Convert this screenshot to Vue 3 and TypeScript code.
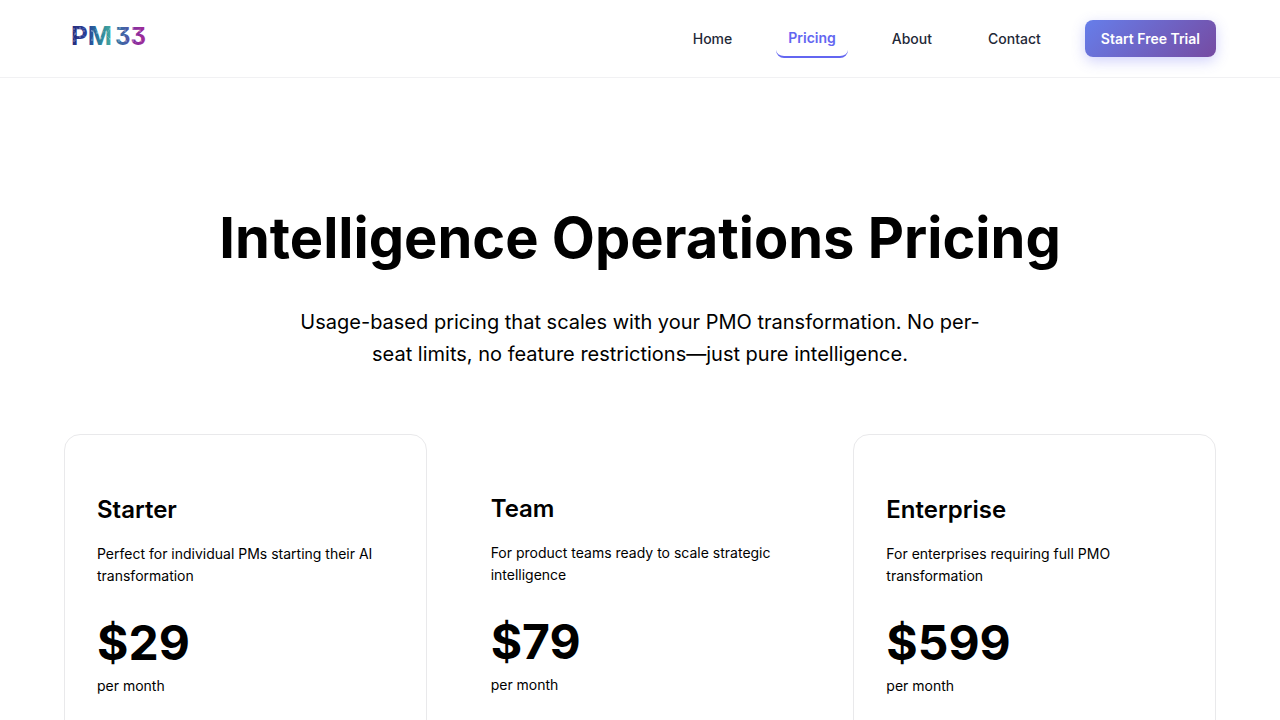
<script setup lang="ts">
interface NavLink {
  label: string
  active?: boolean
}

interface Plan {
  name: string
  description: string
  price: string
  period: string
  featured?: boolean
}

const links: NavLink[] = [
  { label: 'Home' },
  { label: 'Pricing', active: true },
  { label: 'About' },
  { label: 'Contact' },
]

const plans: Plan[] = [
  {
    name: 'Starter',
    description: 'Perfect for individual PMs starting their AI transformation',
    price: '$29',
    period: 'per month',
  },
  {
    name: 'Team',
    description: 'For product teams ready to scale strategic intelligence',
    price: '$79',
    period: 'per month',
    featured: true,
  },
  {
    name: 'Enterprise',
    description: 'For enterprises requiring full PMO transformation',
    price: '$599',
    period: 'per month',
  },
]

// Nodes of the circuit pattern laid over the wordmark
const logoNodes: [number, number][] = [
  [10, 9], [11, 14], [10, 21], [16, 8], [20, 11], [16, 17], [28, 11], [28, 20],
  [33, 13], [37, 18], [42, 12], [46, 9], [46, 19], [56, 8], [61, 11], [60, 16],
  [55, 21], [62, 21], [69, 8], [76, 11], [73, 16], [69, 21], [77, 21],
]
</script>

<template>
  <div class="page">
    <header class="header">
      <a class="logo" href="#" aria-label="PM 33">
        <svg width="88" height="37" viewBox="0 0 88 37">
          <defs>
            <linearGradient id="pm" gradientUnits="userSpaceOnUse" x1="8" y1="0" x2="48" y2="0">
              <stop offset="0" stop-color="#272c7c" />
              <stop offset="0.4" stop-color="#28409a" />
              <stop offset="0.65" stop-color="#2a7a9c" />
              <stop offset="1" stop-color="#45ada0" />
            </linearGradient>
            <linearGradient id="num" gradientUnits="userSpaceOnUse" x1="51" y1="0" x2="81" y2="0">
              <stop offset="0" stop-color="#2d7ba5" />
              <stop offset="0.42" stop-color="#4c58a5" />
              <stop offset="0.6" stop-color="#8430a0" />
              <stop offset="1" stop-color="#a02a96" />
            </linearGradient>
          </defs>
          <text class="logo-letters" x="7" y="25" fill="url(#pm)">PM</text>
          <text class="logo-digits" x="51" y="25" fill="url(#num)">33</text>
          <g fill="none" stroke="#ffffff" stroke-opacity="0.3" stroke-width="0.6">
            <path
              d="M8 10l4 3-3 4 3 4M12 8l4 2 5-2M13 17l5-2 4 2M27 10l4 4-3 5M31 9l5 7 4-5M45 10l-3 5 4 4M53 9l5 2 4-2M56 16l5 2-4 4M67 9l5 1 5-1M71 16l5 2-5 5"
            />
          </g>
          <g fill="#ffffff" fill-opacity="0.6">
            <circle v-for="[x, y] in logoNodes" :key="`${x}-${y}`" :cx="x" :cy="y" r="0.7" />
          </g>
        </svg>
      </a>
      <nav class="nav" aria-label="Main">
        <a
          v-for="link in links"
          :key="link.label"
          href="#"
          class="nav-link"
          :class="{ active: link.active }"
          :aria-current="link.active ? 'page' : undefined"
        >{{ link.label }}</a>
        <button type="button" class="cta">Start Free Trial</button>
      </nav>
    </header>

    <main>
      <section class="hero">
        <h1>Intelligence Operations Pricing</h1>
        <p>
          Usage-based pricing that scales with your PMO transformation. No per-seat limits, no
          feature restrictions—just pure intelligence.
        </p>
      </section>

      <section class="plans" aria-label="Plans">
        <article
          v-for="plan in plans"
          :key="plan.name"
          class="plan"
          :class="{ featured: plan.featured }"
        >
          <h2>{{ plan.name }}</h2>
          <p class="description">{{ plan.description }}</p>
          <div class="price">{{ plan.price }}</div>
          <div class="period">{{ plan.period }}</div>
        </article>
      </section>
    </main>
  </div>
</template>

<style>
body {
  margin: 0;
  background: #ffffff;
}
</style>

<style scoped>
.page {
  height: 100vh;
  overflow: hidden;
  color: #000000;
  font-family: Inter, 'Liberation Sans', sans-serif;
}

.header {
  display: flex;
  align-items: center;
  justify-content: space-between;
  height: 77px;
  padding: 0 64px;
  border-bottom: 1px solid #f1f1f3;
}

.logo {
  display: flex;
}

.logo-letters {
  font-size: 26px;
  font-weight: 700;
}

.logo-digits {
  font-size: 24px;
  font-weight: 700;
  font-feature-settings: 'cv09';
}

.nav {
  display: flex;
  align-items: center;
  gap: 32px;
}

.nav-link {
  padding: 8px 12px;
  border-radius: 8px;
  color: #1f2937;
  font-size: 14px;
  font-weight: 500;
  line-height: 20px;
  text-decoration: none;
}

.nav-link.active {
  border-bottom: 2px solid #6366f1;
  color: #6366f1;
  font-weight: 600;
}

.cta {
  padding: 10px 16px;
  border: 0;
  border-radius: 8px;
  background: linear-gradient(135deg, #667eea 0%, #764ba2 100%);
  box-shadow: 0 4px 14px rgba(99, 102, 241, 0.3);
  color: #ffffff;
  font-family: inherit;
  font-size: 14px;
  font-weight: 600;
  line-height: 17px;
}

.hero {
  display: flex;
  flex-direction: column;
  align-items: center;
  padding: 128px 64px 64px;
  text-align: center;
}

.hero h1 {
  margin: 0 0 36px;
  font-size: 56px;
  font-weight: 700;
  line-height: 64px;
}

.hero p {
  max-width: 700px;
  margin: 0;
  font-size: 20px;
  line-height: 32px;
}

.plans {
  display: grid;
  grid-template-columns: repeat(3, 1fr);
  gap: 32px;
  padding: 0 64px;
}

.plan {
  padding: 60px 32px 64px;
  border: 1px solid #e9e9eb;
  border-radius: 16px;
}

.plan.featured {
  border: 0;
}

.plan h2 {
  margin: 0 0 18px;
  font-size: 24px;
  font-weight: 600;
  line-height: 30px;
}

.description {
  margin: 0 0 32px;
  font-size: 14px;
  line-height: 22px;
}

.price {
  font-size: 48px;
  font-weight: 700;
  line-height: 48px;
}

.period {
  margin-top: 8px;
  font-size: 14px;
  line-height: 22px;
}
</style>
